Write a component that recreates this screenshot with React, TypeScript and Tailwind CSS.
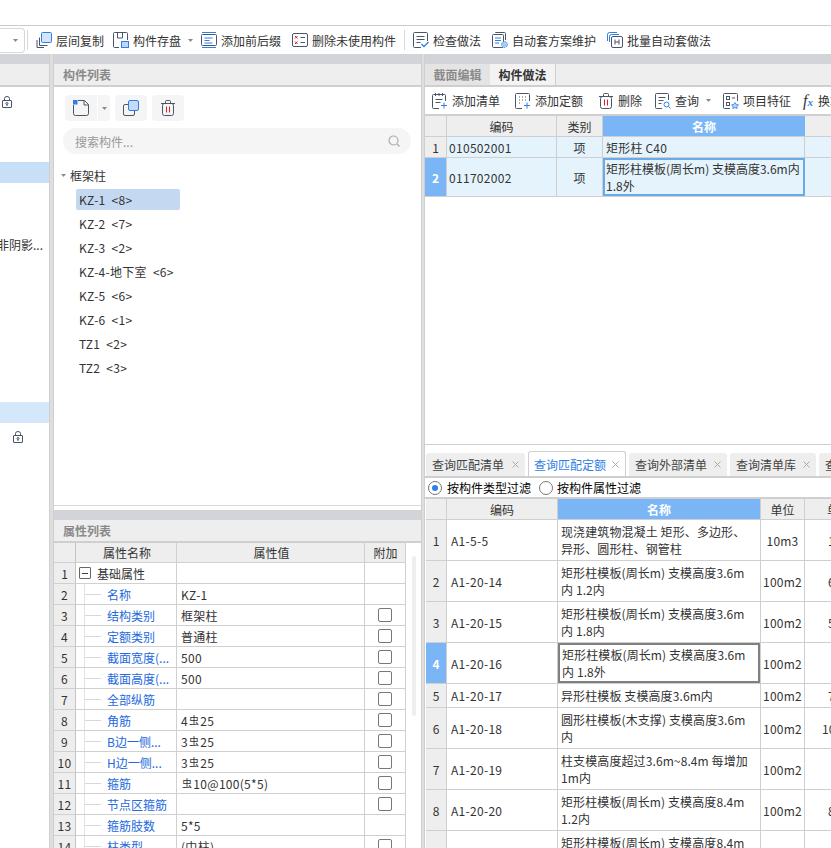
import type { ReactNode } from "react";

const line = "#4a5568";
const blue = "#2f7fe6";

const Caret = () => (
  <svg width="5" height="3" viewBox="0 0 5 3" className="shrink-0">
    <path d="M0 0h5L2.500 3z" fill="#8a8a8a" />
  </svg>
);

const Ico = ({ children }: { children: ReactNode }) => (
  <svg width="16" height="16" viewBox="0 0 16 16" fill="none" stroke={line} strokeWidth="1" className="shrink-0">
    {children}
  </svg>
);

const Lock = () => (
  <svg width="10" height="12" viewBox="0 0 10 12" fill="none" stroke={line} strokeWidth="1">
    <rect x=".5" y="4.500" width="9" height="7" rx=".5" />
    <path d="M2.500 4.500V2.500a2.500 2 0 0 1 5 0v2" />
    <circle cx="5" cy="7.500" r="1" />
    <path d="M5 8.500v1.500" />
  </svg>
);

const icons: Record<string, ReactNode> = {
  copy: (
    <>
      <rect x="5.500" y=".5" width="10" height="10" rx="1" fill="#d4e5fb" stroke={blue} />
      <path d="M3.500 5.500v8h8M1 8v7.500h7" />
    </>
  ),
  save: (
    <>
      <path d="M6 15.500H1.500a1 1 0 0 1-1-1v-13a1 1 0 0 1 1-1h12a1 1 0 0 1 1 1V8M4.500 1v5h5V1" />
      <rect x="8.500" y="9.500" width="7" height="6" fill="#bcd7f7" stroke={blue} />
    </>
  ),
  prefix: (
    <>
      <path d="M1 .5h14M1 15.500h14" stroke={blue} />
      <rect x=".5" y="2.500" width="15" height="11" rx="1" />
      <path d="M3.500 6h8M3.500 8.500h5M3.500 11h8" stroke={blue} />
    </>
  ),
  unused: (
    <>
      <rect x=".5" y="1.500" width="15" height="13" rx="1.500" />
      <path d="M3 4l2.500 2.500M5.500 4L3 6.500M3 9.500l2.500 2.500M5.500 9.500L3 12" stroke="#e02020" />
      <path d="M8.500 5.500h4.500M8.500 10.500h4.500" />
    </>
  ),
  check: (
    <>
      <path d="M8 15.500H1.500a1 1 0 0 1-1-1v-13a1 1 0 0 1 1-1h12a1 1 0 0 1 1 1V9" />
      <path d="M3.500 4.500h8M3.500 7.500h8M3.500 10.500h4" />
      <path d="M8.500 12l2.500 2.500 4.500-4.500" stroke={blue} strokeWidth="1.300" />
    </>
  ),
  scheme: (
    <>
      <path d="M3.500 1V.500h9a1 1 0 0 1 1 1V8" />
      <rect x=".5" y="2.500" width="11" height="13" rx="1" />
      <path d="M3 6h6M3 8.500h6M3 11h4" stroke={blue} />
      <circle cx="12.500" cy="12.500" r="3" fill="#a9ccf5" stroke={blue} strokeDasharray="1 1" />
    </>
  ),
  batch: (
    <>
      <path d="M.5 9V2.500a2 2 0 0 1 2-2H10M2.500 10V4.500a2 2 0 0 1 2-2H12" stroke={blue} />
      <rect x="4.500" y="4.500" width="11" height="11" rx="1.500" />
      <path d="M8 7.500v5M12 7.500v5M8 10h4" />
    </>
  ),
  addList: (
    <>
      <path d="M7 15.500H1.500a1 1 0 0 1-1-1v-12a1 1 0 0 1 1-1h11a1 1 0 0 1 1 1V8M3.500 0v3M7 0v3M10.500 0v3M3.500 6.500h7M3.500 9.500h5" />
      <path d="M12 9.500v6M9 12.500h6" stroke={blue} />
    </>
  ),
  addQuota: (
    <>
      <path d="M7 15.500H1.500a1 1 0 0 1-1-1v-13a1 1 0 0 1 1-1h12a1 1 0 0 1 1 1V8" />
      <path d="M4 4h1M7 4h1M10 4h1M4 7h1M7 7h1M10 7h1M4 10h1" />
      <path d="M12 9.500v6M9 12.500h6" stroke={blue} />
    </>
  ),
  trash: (
    <>
      <path d="M1 3.500h14M5.500 3V1.500a1 1 0 0 1 1-1h3a1 1 0 0 1 1 1V3" />
      <rect x="2.500" y="3.500" width="11" height="12" rx="2" />
      <path d="M6.500 6.500v6M9.500 6.500v6" stroke="#e02020" />
    </>
  ),
  query: (
    <>
      <path d="M7 15.500H1.500a1 1 0 0 1-1-1v-13a1 1 0 0 1 1-1h11a1 1 0 0 1 1 1V7M3.500 4.500h7M3.500 7.500h5M3.500 10.500h3" />
      <circle cx="11.500" cy="11.500" r="2.500" stroke={blue} />
      <path d="M13.500 13.500l2 2" stroke={blue} />
    </>
  ),
  feature: (
    <>
      <path d="M7 15.500H1.500a1 1 0 0 1-1-1v-13a1 1 0 0 1 1-1h12a1 1 0 0 1 1 1V8" />
      <rect x="3.500" y="3.500" width="3" height="3" />
      <rect x="3.500" y="9.500" width="3" height="3" />
      <path d="M9 5h3" />
      <path d="M12 9.500l1.200 2 2.300.4-1.700 1.500.4 2.100-2.200-1-2.200 1 .4-2.100-1.700-1.500 2.300-.4z" fill="#bcd7f7" stroke={blue} strokeWidth=".8" />
    </>
  ),
  newDoc: (
    <>
      <path d="M5 .5h6.500l4 4v9a2 2 0 0 1-2 2h-11a2 2 0 0 1-2-2V5" />
      <path d="M11 .5v4.500h4.500" />
      <rect x="0" y="0" width="4.500" height="4.500" fill={blue} stroke="none" />
    </>
  ),
  dup: (
    <>
      <rect x="5.500" y=".5" width="10" height="10" rx="1.500" fill="#c4daf7" stroke={blue} />
      <path d="M5 4.500H2a1.500 1.500 0 0 0-1.500 1.500v8A1.500 1.500 0 0 0 2 15.500h8a1.500 1.500 0 0 0 1.500-1.500v-3" />
    </>
  ),
};

const Tool = ({ icon, label, className = "", caret = false }: { icon: string; label: string; className?: string; caret?: boolean }) => (
  <div className={`flex items-center gap-[4px] shrink-0 ${className}`}>
    <Ico>{icons[icon]}</Ico>
    <span className="whitespace-nowrap">{label}</span>
    {caret && <span className="ml-[3px] flex"><Caret /></span>}
  </div>
);

const Band = () => <div className="h-[10px] bg-[#d2d4d9] shrink-0" />;

const Splitter = ({ w }: { w: string }) => (
  <div className={`${w} shrink-0 bg-[#dedede] border-x border-[#cfcfcf]`} />
);

const PanelTitle = ({ children }: { children: ReactNode }) => (
  <div className="h-[23px] shrink-0 bg-[#eeeeee] border-b-2 border-[#cfcfcf] pl-[9px] flex items-center font-bold text-[#8a8a8a]">
    {children}
  </div>
);

const tree = ["KZ-1 <8>", "KZ-2 <7>", "KZ-3 <2>", "KZ-4-地下室 <6>", "KZ-5 <6>", "KZ-6 <1>", "TZ1 <2>", "TZ2 <3>"];

const Bar = () => <span className="text-[10px] leading-none align-[2px] mx-[1px]">虫</span>;

const attrs: [string, ReactNode, boolean][] = [
  ["名称", "KZ-1", false],
  ["结构类别", "框架柱", true],
  ["定额类别", "普通柱", true],
  ["截面宽度(...", "500", true],
  ["截面高度(...", "500", true],
  ["全部纵筋", "", true],
  ["角筋", <>4<Bar />25</>, true],
  ["B边一侧...", <>3<Bar />25</>, true],
  ["H边一侧...", <>3<Bar />25</>, true],
  ["箍筋", <><Bar />10@100(5*5)</>, true],
  ["节点区箍筋", "", true],
  ["箍筋肢数", "5*5", false],
  ["柱类型", "(中柱)", true],
];

const AttrCheck = () => <div className="w-[14px] h-[14px] border border-[#777] rounded-[2px] bg-white" />;

const AttrRow = ({ n, name, value, check }: { n: number; name: string; value: ReactNode; check: boolean }) => (
  <div className="flex h-[21px] border-b border-[#d0d0d0] shrink-0">
    <div className="w-[22px] shrink-0 bg-[#eeeeee] border-r border-[#c4c4c4] flex items-center justify-center tracking-[0.3px]">{n}</div>
    <div className="w-[101px] shrink-0 border-r border-[#d0d0d0] flex items-center overflow-hidden">
      <div className="ml-[8px] w-px h-full bg-[#e2e2e2]" />
      <div className="w-[16px] h-px bg-[#d8d8d8]" />
      <span className="ml-[6px] text-[#2368dd] whitespace-nowrap">{name}</span>
    </div>
    <div className="w-[188px] shrink-0 border-r border-[#d0d0d0] flex items-center pl-[4px] whitespace-nowrap tracking-[0.3px]">
      <span>{value}</span>
    </div>
    <div className="w-[41px] shrink-0 border-r border-[#d0d0d0] flex items-center justify-center">{check && <AttrCheck />}</div>
  </div>
);

const quotas = [
  { code: "A1-5-5", name: "现浇建筑物混凝土 矩形、多边形、\n异形、圆形柱、钢管柱", unit: "10m3", price: "1", h: "h-[41px]" },
  { code: "A1-20-14", name: "矩形柱模板(周长m) 支模高度3.6m\n内 1.2内", unit: "100m2", price: "6", h: "h-[41px]" },
  { code: "A1-20-15", name: "矩形柱模板(周长m) 支模高度3.6m\n内 1.8内", unit: "100m2", price: "5", h: "h-[41px]" },
  { code: "A1-20-16", name: "矩形柱模板(周长m) 支模高度3.6m\n内 1.8外", unit: "100m2", price: "", h: "h-[41px]" },
  { code: "A1-20-17", name: "异形柱模板 支模高度3.6m内", unit: "100m2", price: "7", h: "h-[24px]" },
  { code: "A1-20-18", name: "圆形柱模板(木支撑) 支模高度3.6m\n内", unit: "100m2", price: "10", h: "h-[41px]" },
  { code: "A1-20-19", name: "柱支模高度超过3.6m~8.4m 每增加\n1m内", unit: "100m2", price: "", h: "h-[41px]" },
  { code: "A1-20-20", name: "矩形柱模板(周长m) 支模高度8.4m\n1.2内", unit: "100m2", price: "8", h: "h-[41px]" },
  { code: "", name: "矩形柱模板(周长m) 支模高度8.4m\n1.8内", unit: "", price: "", h: "h-[41px]" },
];

const Tab = ({ label, width, active = false }: { label: string; width: string; active?: boolean }) => (
  <div
    className={`shrink-0 flex items-center justify-between rounded-t-[3px] whitespace-nowrap ${width} ${
      active ? "h-[25px] pl-[5px] pr-[6px] bg-white border border-b-0 border-[#cfcfcf] text-[#2f7fe6]" : "h-[23px] px-[6px] bg-[#eeeeee] text-[#444]"
    }`}
  >
    {label}
    <svg width="7" height="7" viewBox="0 0 7 7" stroke="#aaa" strokeWidth="1" className="shrink-0">
      <path d="M.5.5l6 6M6.500.5l-6 6" />
    </svg>
  </div>
);

export default function App() {
  return (
    <div
      className="w-[831px] h-[848px] overflow-hidden flex flex-col bg-white text-[12px] leading-[17px] text-[#333]"
      style={{ fontFamily: '"Noto Sans CJK SC", sans-serif' }}
    >
      <div className="h-[26px] shrink-0 border-b border-[#cccccc]" />

      {/* top toolbar */}
      <div className="h-[28px] shrink-0 flex items-center">
        <div className="w-[25px] h-[25px] border border-l-0 border-[#d8d8d8] rounded-r-[4px] flex items-center justify-end pr-[6px]">
          <Caret />
        </div>
        <div className="w-px h-[20px] bg-[#d8d8d8] ml-[2px]" />
        <Tool icon="copy" label="层间复制" className="ml-[8px]" />
        <Tool icon="save" label="构件存盘" className="ml-[9px]" caret />
        <Tool icon="prefix" label="添加前后缀" className="ml-[8px]" />
        <Tool icon="unused" label="删除未使用构件" className="ml-[11px]" />
        <div className="w-px h-[20px] bg-[#d8d8d8] ml-[8px]" />
        <Tool icon="check" label="检查做法" className="ml-[8px]" />
        <Tool icon="scheme" label="自动套方案维护" className="ml-[11px]" />
        <Tool icon="batch" label="批量自动套做法" className="ml-[11px]" />
      </div>

      <div className="flex-1 min-h-0 flex">
        {/* left clipped tree */}
        <div className="w-[49px] shrink-0 flex flex-col overflow-hidden">
          <Band />
          <div className="h-[23px] shrink-0 bg-[#eeeeee] border-b-2 border-[#cfcfcf]" />
          <div className="h-[75px] shrink-0 pl-[2px] pt-[9px]">
            <Lock />
          </div>
          <div className="h-[21px] shrink-0 bg-[#c7dff7]" />
          <div className="h-[51px] shrink-0" />
          <div className="h-[20px] shrink-0 whitespace-nowrap flex justify-end items-center pr-[6px]">非阴影...</div>
          <div className="h-[148px] shrink-0" />
          <div className="h-[21px] shrink-0 bg-[#d5e8fb]" />
          <div className="pl-[13px] pt-[8px]">
            <Lock />
          </div>
        </div>
        <Splitter w="w-[5px]" />

        {/* component list + properties */}
        <div className="w-[367px] shrink-0 flex flex-col">
          <Band />
          <PanelTitle>构件列表</PanelTitle>
          <div className="h-[419px] shrink-0 border-b border-[#d8d8d8] flex flex-col">
            <div className="flex mt-[8px] ml-[11px] h-[26px] gap-[5px]">
              <div className="flex gap-px">
                <div className="w-[32px] bg-[#f5f5f5] rounded-l-[4px] flex items-center justify-center">
                  <Ico>{icons.newDoc}</Ico>
                </div>
                <div className="w-[12px] bg-[#f5f5f5] rounded-r-[4px] flex items-center justify-center">
                  <Caret />
                </div>
              </div>
              <div className="w-[32px] bg-[#f5f5f5] rounded-[4px] flex items-center justify-center">
                <Ico>{icons.dup}</Ico>
              </div>
              <div className="w-[32px] bg-[#f5f5f5] rounded-[4px] flex items-center justify-center">
                <Ico>{icons.trash}</Ico>
              </div>
            </div>
            <div className="mt-[7px] ml-[9px] mr-[10px] h-[26px] rounded-full bg-[#f5f5f5] flex items-center justify-between pl-[12px] pr-[11px] text-[#999]">
              <span>搜索构件...</span>
              <svg width="12" height="12" viewBox="0 0 12 12" fill="none" stroke="#aaa" strokeWidth="1.200">
                <circle cx="5.500" cy="5.500" r="4.500" />
                <path d="M9 9l2.500 2.500" />
              </svg>
            </div>
            <div className="mt-[12px] h-[18px] flex items-center pl-[7px] gap-[4px]">
              <Caret />
              <span>框架柱</span>
            </div>
            <div className="flex flex-col gap-[3px] ml-[22px] mt-[5px]">
              {tree.map((t, i) => (
                <div
                  key={t}
                  className={`h-[21px] w-[104px] pl-[3px] pb-[1px] flex items-center rounded-[2px] whitespace-nowrap tracking-[0.3px] [word-spacing:3px] ${i === 0 ? "bg-[#c4d9f1]" : ""}`}
                >
                  {t}
                </div>
              ))}
            </div>
          </div>
          <div className="h-[4px] shrink-0" />
          <Band />
          <PanelTitle>属性列表</PanelTitle>
          <div className="flex-1 min-h-0 flex overflow-hidden">
            <div className="flex flex-col">
              <div className="flex h-[20px] shrink-0 bg-[#eeeeee] border-b border-[#d0d0d0] text-center leading-[20px]">
                <div className="w-[22px] border-r border-[#c4c4c4]" />
                <div className="w-[101px] pl-[2px] border-r border-[#d0d0d0]">属性名称</div>
                <div className="w-[188px] pl-[2px] border-r border-[#d0d0d0]">属性值</div>
                <div className="w-[41px] pl-[1px] border-r border-[#d0d0d0]">附加</div>
              </div>
              <div className="flex h-[21px] border-b border-[#d0d0d0] shrink-0">
                <div className="w-[22px] shrink-0 bg-[#eeeeee] border-r border-[#c4c4c4] flex items-center justify-center">1</div>
                <div className="w-[101px] shrink-0 border-r border-[#d0d0d0] flex items-center pl-[3px] gap-[6px]">
                  <div className="w-[12px] h-[12px] border border-[#666] rounded-[1px] flex items-center justify-center">
                    <div className="w-[6px] h-px bg-[#444]" />
                  </div>
                  基础属性
                </div>
                <div className="w-[188px] shrink-0 border-r border-[#d0d0d0]" />
                <div className="w-[41px] shrink-0 border-r border-[#d0d0d0]" />
              </div>
              {attrs.map(([name, value, check], i) => (
                <AttrRow key={name} n={i + 2} name={name} value={value} check={check} />
              ))}
            </div>
            <div className="ml-[6px] mt-[13px] w-[4px] h-[160px] rounded-full bg-[#eeeeee]" />
          </div>
        </div>
        <Splitter w="w-[4px]" />

        {/* right side */}
        <div className="flex-1 min-w-0 flex flex-col overflow-hidden">
          <Band />
          <div className="h-[23px] shrink-0 bg-[#eeeeee] border-b-2 border-[#cfcfcf] flex">
            <div className="w-[65px] bg-[#e4e4e4] flex items-center justify-center font-bold text-[#8a8a8a]">截面编辑</div>
            <div className="w-[66px] bg-[#f3f3f3] border-r border-[#cfcfcf] flex items-center justify-center font-bold">构件做法</div>
          </div>
          <div className="h-[29px] shrink-0 flex items-center pl-[7px] border-b-2 border-[#cfcfcf]">
            <Tool icon="addList" label="添加清单" />
            <Tool icon="addQuota" label="添加定额" className="ml-[15px]" />
            <Tool icon="trash" label="删除" className="ml-[15px]" />
            <Tool icon="query" label="查询" className="ml-[13px]" caret />
            <Tool icon="feature" label="项目特征" className="ml-[12px]" />
            <div className="ml-[12px] flex items-center gap-[5px] shrink-0">
              <span className="italic text-[16px] leading-none" style={{ fontFamily: '"Liberation Serif", serif' }}>
                f<span className="text-[#2f7fe6] text-[11px] font-bold">x</span>
              </span>
              <span>换算</span>
            </div>
          </div>

          {/* method table */}
          <div className="h-[329px] shrink-0 border-b border-[#cfcfcf]">
            <div className="flex h-[21px] bg-[#eeeeee] border-b border-[#cfcfcf] text-center leading-[21px]">
              <div className="w-[22px] shrink-0 border-r border-[#cfcfcf]" />
              <div className="w-[110px] shrink-0 border-r border-[#cfcfcf]">编码</div>
              <div className="w-[46px] shrink-0 border-r border-[#cfcfcf]">类别</div>
              <div className="w-[202px] shrink-0 bg-[#7ab6f5] text-white font-bold">名称</div>
            </div>
            <div className="flex h-[21px] bg-[#e5f3fd] border-b border-[#cfcfcf] items-stretch">
              <div className="w-[22px] shrink-0 bg-[#eeeeee] border-r border-[#cfcfcf] flex items-center justify-center">1</div>
              <div className="w-[110px] shrink-0 border-r border-[#cfcfcf] flex items-center pl-[2px] tracking-[0.3px]">010502001</div>
              <div className="w-[46px] shrink-0 border-r border-[#cfcfcf] flex items-center justify-center">项</div>
              <div className="w-[202px] shrink-0 border-r border-[#cfcfcf] flex items-center pl-[3px] tracking-[0.2px]">矩形柱 C40</div>
            </div>
            <div className="flex h-[39px] bg-[#e5f3fd] border-b border-[#cfcfcf] items-stretch">
              <div className="w-[22px] shrink-0 bg-[#7ab6f5] text-white font-bold border-r border-[#cfcfcf] flex items-center justify-center">2</div>
              <div className="w-[110px] shrink-0 border-r border-[#cfcfcf] flex items-center pl-[2px] tracking-[0.3px]">011702002</div>
              <div className="w-[46px] shrink-0 border-r border-[#cfcfcf] flex items-center justify-center">项</div>
              <div className="w-[202px] shrink-0 border-2 border-[#6aaae8] pl-[1px] flex items-center whitespace-pre-line">
                {"矩形柱模板(周长m) 支模高度3.6m内\n1.8外"}
              </div>
            </div>
          </div>

          {/* query tabs */}
          <div className="h-[6px] shrink-0" />
          <div className="flex items-end gap-[3px] pl-[1px] h-[25px] shrink-0">
            <Tab label="查询匹配清单" width="w-[99px]" />
            <Tab label="查询匹配定额" width="w-[98px]" active />
            <Tab label="查询外部清单" width="w-[98px]" />
            <Tab label="查询清单库" width="w-[86px]" />
            <Tab label="查询" width="w-[60px]" />
          </div>
          <div className="h-[23px] shrink-0 border-y-2 border-[#cfcfcf] flex items-center pl-[3px] text-black">
            <div className="w-[14px] h-[14px] rounded-full border border-[#777] flex items-center justify-center">
              <div className="w-[6px] h-[6px] rounded-full bg-[#2f7fe6]" />
            </div>
            <span className="ml-[5px]">按构件类型过滤</span>
            <div className="ml-[8px] w-[14px] h-[14px] rounded-full border border-[#777]" />
            <span className="ml-[4px]">按构件属性过滤</span>
          </div>

          {/* quota table */}
          <div className="flex flex-col pl-[1px]">
            <div className="flex h-[21px] shrink-0 bg-[#eeeeee] border-b border-[#cfcfcf] text-center leading-[21px]">
              <div className="w-[21px] shrink-0 border-r border-[#cfcfcf]" />
              <div className="w-[111px] shrink-0 border-r border-[#cfcfcf]">编码</div>
              <div className="w-[202px] shrink-0 bg-[#7ab6f5] text-white font-bold">名称</div>
              <div className="w-[45px] shrink-0 border-x border-[#cfcfcf]">单位</div>
              <div className="w-[46px] shrink-0 whitespace-nowrap text-left pl-[22px]">单价</div>
            </div>
            {quotas.map((q, i) => (
              <div key={i} className={`flex ${q.h} shrink-0 border-b border-[#cfcfcf]`}>
                <div className={`w-[21px] shrink-0 border-r border-[#cfcfcf] flex items-center justify-center ${i === 3 ? "bg-[#7ab6f5] text-white font-bold" : "bg-[#eeeeee]"}`}>
                  {q.code ? i + 1 : ""}
                </div>
                <div className="w-[111px] shrink-0 border-r border-[#cfcfcf] flex items-center pl-[4px] tracking-[0.3px]">{q.code}</div>
                <div className={`w-[202px] shrink-0 flex items-center whitespace-pre-line tracking-[0.1px] ${i === 3 ? "border-2 border-[#808080] pl-[2px]" : "pl-[3px]"}`}>{q.name}</div>
                <div className="w-[45px] shrink-0 border-x border-[#cfcfcf] flex items-center justify-center tracking-[0.2px]">{q.unit}</div>
                <div className={`w-[46px] shrink-0 flex items-center overflow-hidden ${i === 5 ? "pl-[17px]" : "pl-[23px]"}`}>{q.price}</div>
              </div>
            ))}
          </div>
        </div>
      </div>
    </div>
  );
}
